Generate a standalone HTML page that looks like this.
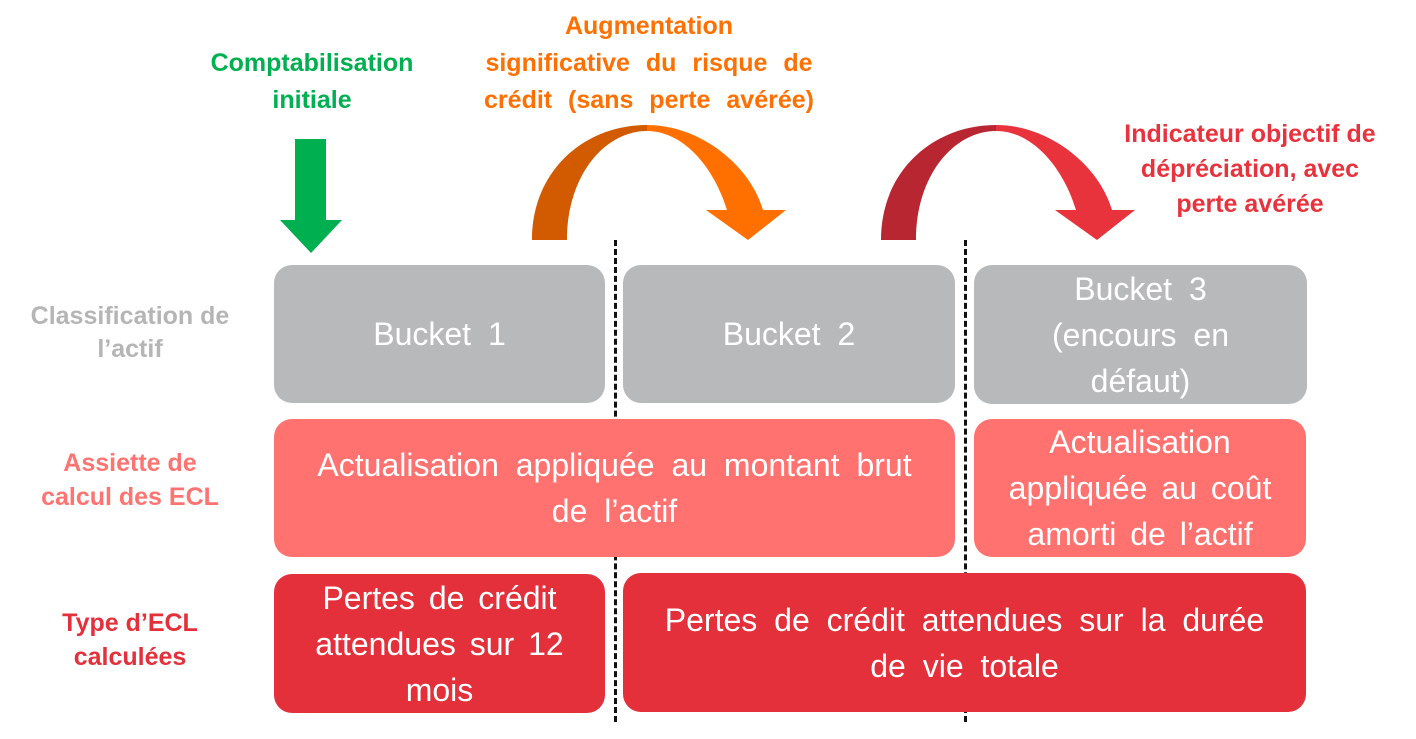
<!DOCTYPE html>
<html><head><meta charset="utf-8"><style>
body{margin:0;width:1416px;height:739px;background:#fff;position:relative;overflow:hidden;font-family:"Liberation Sans",Arial,sans-serif}
.b{position:absolute;border-radius:18px;color:#fff;font-size:32px;line-height:46px;text-align:center;display:flex;align-items:center;justify-content:center;word-spacing:8px}
.g{background:#b7b9bb}.p{background:#ff726f}.r{background:#e3303a}
.l{position:absolute;font-weight:bold;font-size:25px;text-align:center;white-space:nowrap}
.d{position:absolute;width:0;border-left:3px dashed #111;top:240px;height:482px}
</style></head><body>
<div class="l" style="left:162px;top:45px;width:300px;line-height:37px;color:#00b050">Comptabilisation<br>initiale</div>
<div class="l" style="left:449px;top:8px;width:400px;line-height:37px;word-spacing:9px;color:#ff7000">Augmentation<br>significative du risque de<br>crédit (sans perte avérée)</div>
<div class="l" style="left:1100px;top:117px;width:300px;line-height:35px;color:#e8323c">Indicateur objectif de<br>dépréciation, avec<br>perte avérée</div>
<div class="l" style="left:0px;top:300px;width:260px;line-height:33px;color:#b5b5b5">Classification de<br>l’actif</div>
<div class="l" style="left:0px;top:446px;width:260px;line-height:34px;color:#ff7370">Assiette de<br>calcul des ECL</div>
<div class="l" style="left:0px;top:606px;width:260px;line-height:34px;color:#e3303a">Type d’ECL<br>calculées</div>
<svg style="position:absolute;left:0;top:0" width="1416" height="739">
<path d="M295,139H326V220H342L311,253L280,220H295Z" fill="#00b050"/>
<g>
<path d="M532,240C532,170 585,125 647,125L647,131C605,131 567,175 567,240Z" fill="#d25a00"/>
<path d="M647,125C700,125 750,165 763,210H786L748,240L706,210H727C715,170 685,131 647,131Z" fill="#ff7000"/>
</g>
<g transform="translate(349,0)">
<path d="M532,240C532,170 585,125 647,125L647,131C605,131 567,175 567,240Z" fill="#b82632"/>
<path d="M647,125C700,125 750,165 763,210H786L748,240L706,210H727C715,170 685,131 647,131Z" fill="#e8323c"/>
</g>
</svg>
<div class="d" style="left:614px"></div>
<div class="d" style="left:964px"></div>
<div class="b g" style="left:274px;top:265px;width:331px;height:138px">Bucket 1</div>
<div class="b g" style="left:623px;top:265px;width:332px;height:138px">Bucket 2</div>
<div class="b g" style="left:974px;top:265px;width:333px;height:139px">Bucket 3<br>(encours en<br>défaut)</div>
<div class="b p" style="left:274px;top:419px;width:681px;height:138px">Actualisation appliquée au montant brut<br>de l’actif</div>
<div class="b p" style="left:974px;top:419px;width:332px;height:138px;word-spacing:5px">Actualisation<br>appliquée au coût<br>amorti de l’actif</div>
<div class="b r" style="left:274px;top:574px;width:331px;height:139px;word-spacing:5px">Pertes de crédit<br>attendues sur 12<br>mois</div>
<div class="b r" style="left:623px;top:573px;width:683px;height:139px">Pertes de crédit attendues sur la durée<br>de vie totale</div>
</body></html>
